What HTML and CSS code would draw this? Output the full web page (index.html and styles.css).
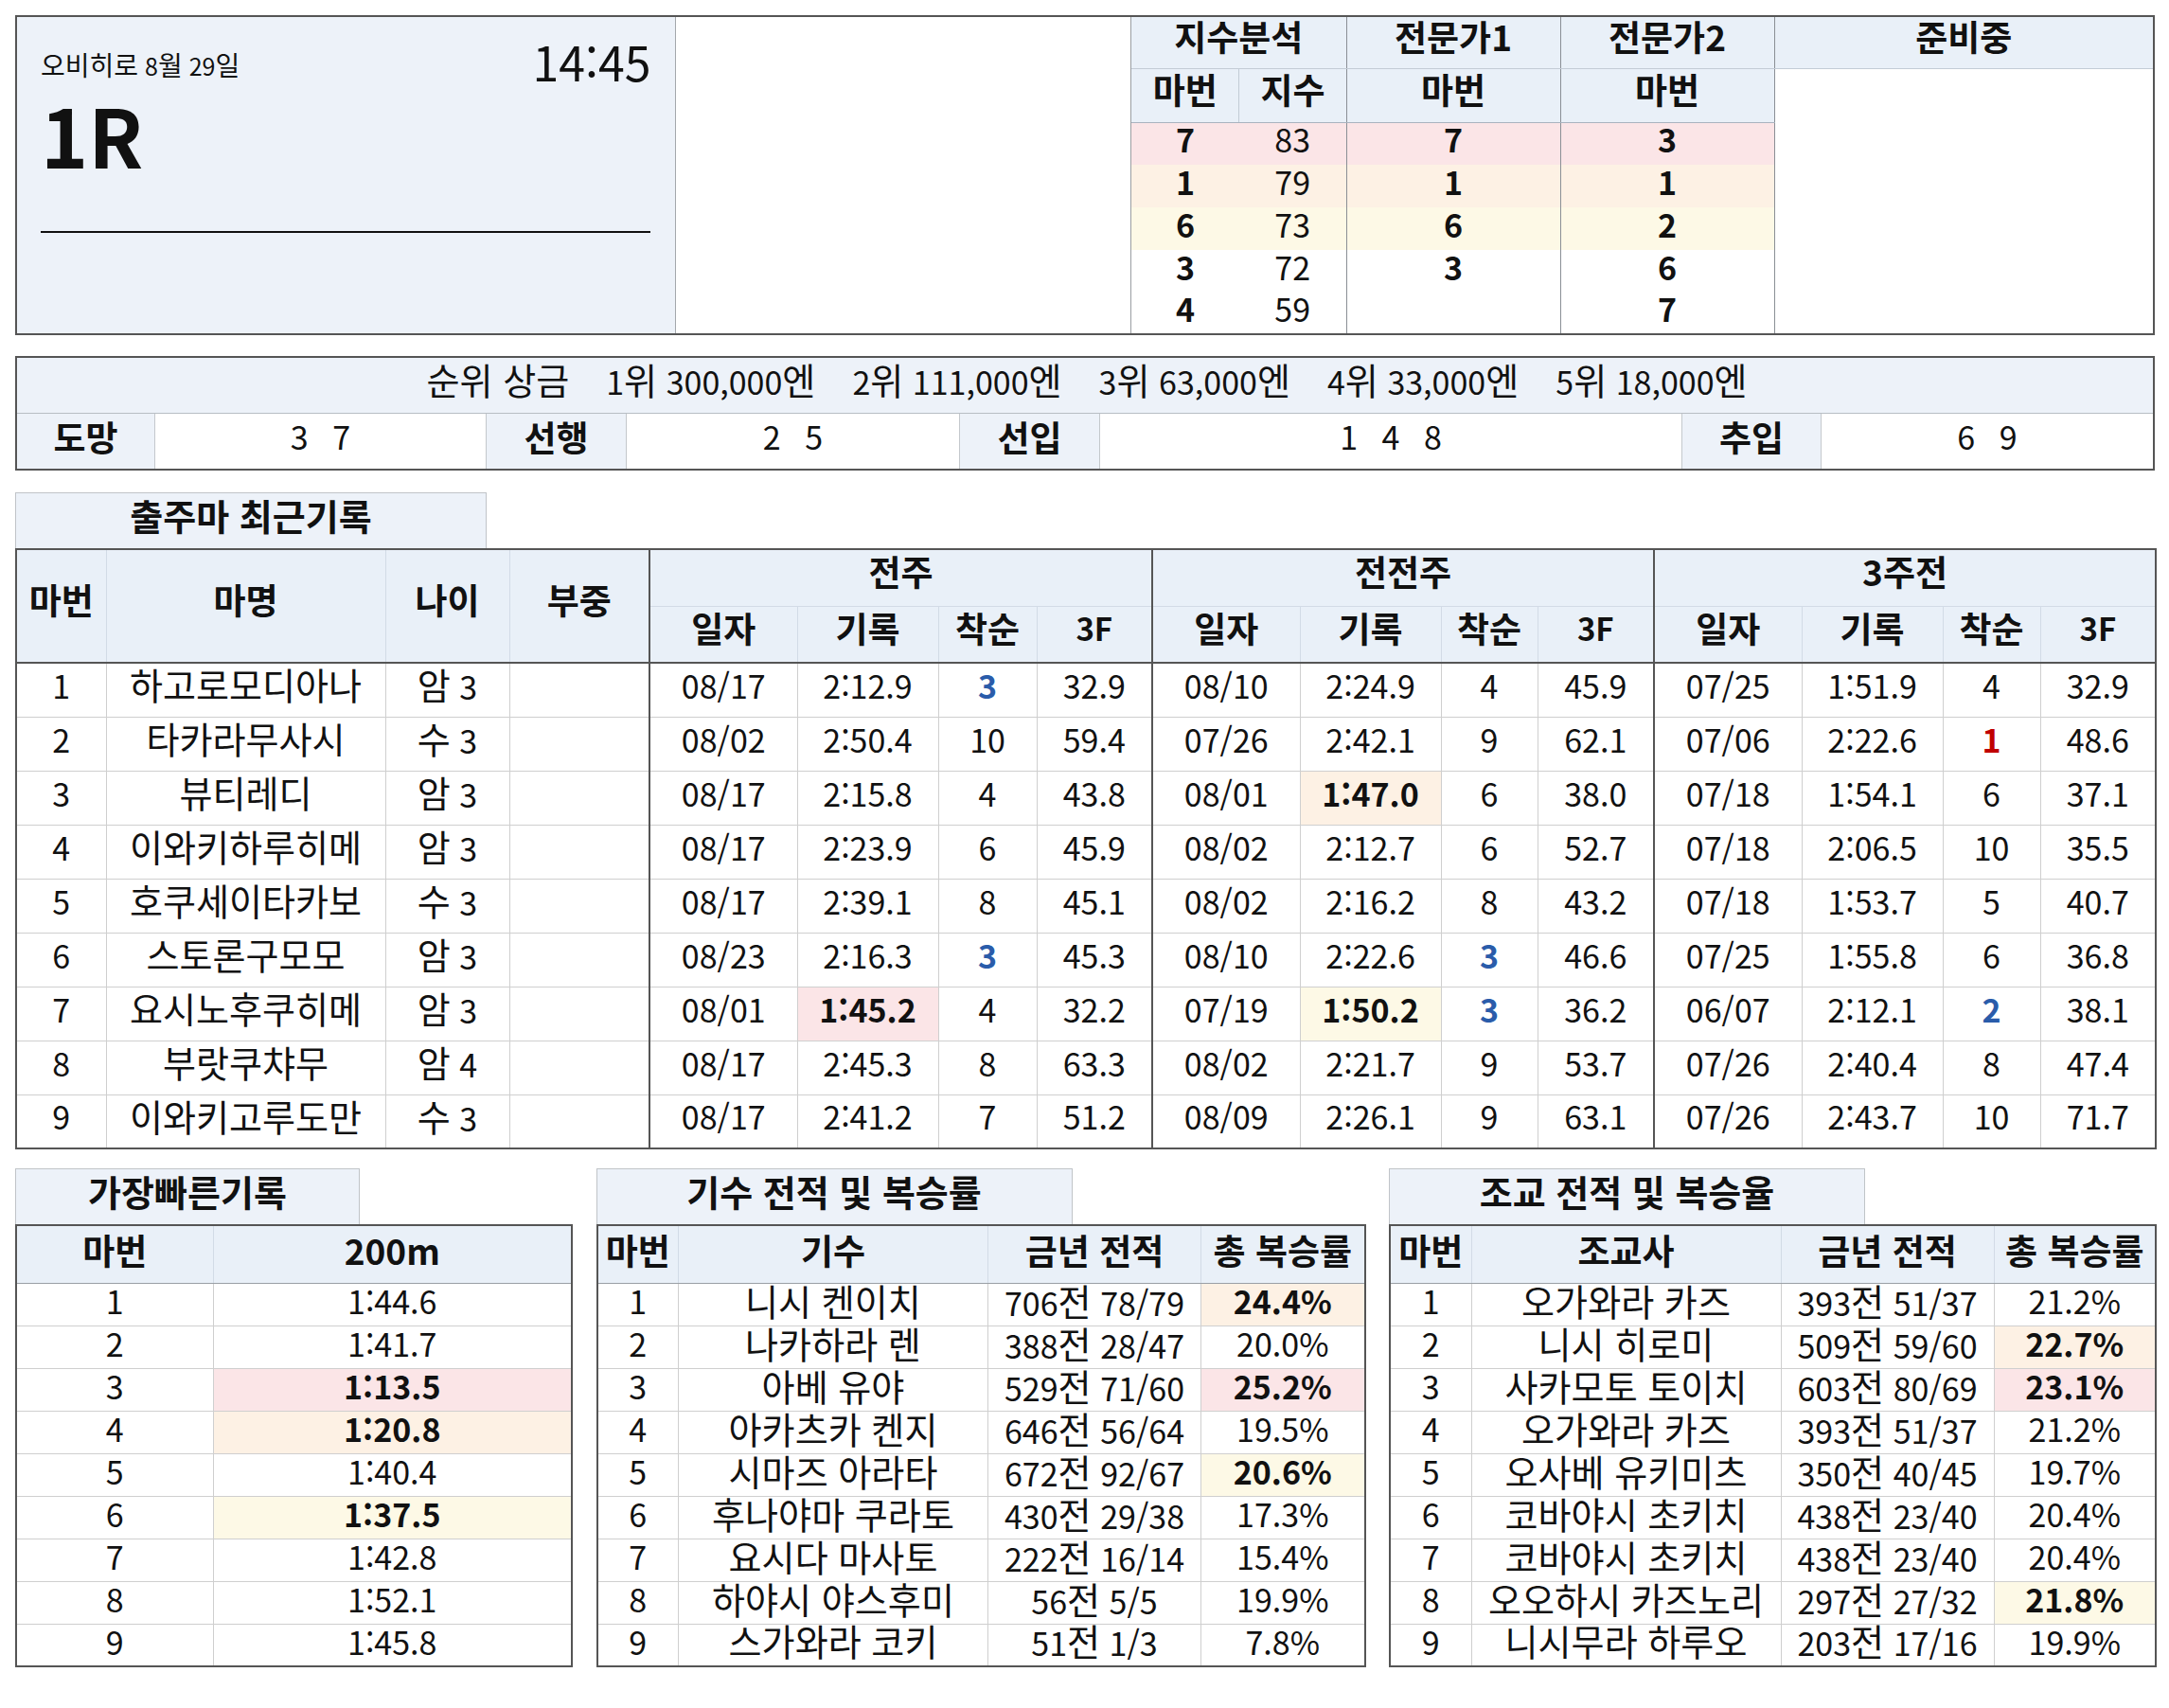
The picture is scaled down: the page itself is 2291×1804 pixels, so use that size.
FILE: index.html
```html
<!DOCTYPE html>
<html lang="ko">
<head>
<meta charset="utf-8">
<title>1R 출주마 정보</title>
<link rel="stylesheet" href="styles.css">
</head>
<body>
<div class="page">
  <section class="top">
    <div class="race">
      <div class="race-head">
        <span class="race-date"><span class="ko">오비히로</span> 8<span class="ko">월</span> 29<span class="ko">일</span></span>
        <span class="race-time">14:45</span>
      </div>
      <div class="race-no">1R</div>
      <div class="race-line"></div>
    </div>
    <div class="top-blank"></div>
    <div class="index-wrap">
      <table class="index">
        <colgroup><col class="i1"><col class="i2"><col class="i3"><col class="i4"><col class="i5"></colgroup>
        <tr class="ih1">
          <th colspan="2" class="gr">지수분석</th>
          <th class="gr">전문가1</th>
          <th class="gr">전문가2</th>
          <th>준비중</th>
        </tr>
        <tr class="ih2">
          <th class="lt">마번</th>
          <th class="gr">지수</th>
          <th class="gr">마번</th>
          <th class="gr">마번</th>
          <td class="blank" rowspan="6"></td>
        </tr>
        <tr class="pink"><td class="b">7</td><td class="gr">83</td><td class="b gr">7</td><td class="b gr">3</td></tr>
        <tr class="orange"><td class="b">1</td><td class="gr">79</td><td class="b gr">1</td><td class="b gr">1</td></tr>
        <tr class="yellow"><td class="b">6</td><td class="gr">73</td><td class="b gr">6</td><td class="b gr">2</td></tr>
        <tr class="short"><td class="b">3</td><td class="gr">72</td><td class="b gr">3</td><td class="b gr">6</td></tr>
        <tr class="short"><td class="b">4</td><td class="gr">59</td><td class="b gr"></td><td class="b gr">7</td></tr>
      </table>
    </div>
  </section>

  <section class="prize">
    <div class="prize-row">
      <span class="ko">순위 상금</span>
      <span>1<span class="ko">위</span> 300,000<span class="ko">엔</span></span>
      <span>2<span class="ko">위</span> 111,000<span class="ko">엔</span></span>
      <span>3<span class="ko">위</span> 63,000<span class="ko">엔</span></span>
      <span>4<span class="ko">위</span> 33,000<span class="ko">엔</span></span>
      <span>5<span class="ko">위</span> 18,000<span class="ko">엔</span></span>
    </div>
    <div class="style-row">
      <div class="lbl">도망</div><div class="val">3 7</div>
      <div class="lbl">선행</div><div class="val">2 5</div>
      <div class="lbl">선입</div><div class="val">1 4 8</div>
      <div class="lbl">추입</div><div class="val">6 9</div>
    </div>
  </section>

  <section class="recent">
    <div class="tab tab-recent">출주마 최근기록</div>
    <table class="main">
      <colgroup>
        <col class="m95"><col class="m295"><col class="m131"><col class="m148">
        <col class="m156"><col class="m149"><col class="m104"><col class="m122">
        <col class="m156"><col class="m149"><col class="m102"><col class="m123">
        <col class="m156"><col class="m149"><col class="m103"><col class="m122">
      </colgroup>
      <thead>
        <tr class="mh1">
          <th rowspan="2" class="hb">마번</th>
          <th rowspan="2" class="hb">마명</th>
          <th rowspan="2" class="hb">나이</th>
          <th rowspan="2" class="hb">부중</th>
          <th colspan="4" class="gs">전주</th>
          <th colspan="4" class="gs">전전주</th>
          <th colspan="4" class="gs">3주전</th>
        </tr>
        <tr class="mh2">
          <th class="hb gs">일자</th><th class="hb">기록</th><th class="hb">착순</th><th class="hb n">3F</th>
          <th class="hb gs">일자</th><th class="hb">기록</th><th class="hb">착순</th><th class="hb n">3F</th>
          <th class="hb gs">일자</th><th class="hb">기록</th><th class="hb">착순</th><th class="hb n">3F</th>
        </tr>
      </thead>
      <tbody>
        <tr><td>1</td><td class="ko">하고로모디아나</td><td><span class="ko">암</span> 3</td><td></td>
          <td class="gs">08/17</td><td>2:12.9</td><td class="blue">3</td><td>32.9</td>
          <td class="gs">08/10</td><td>2:24.9</td><td>4</td><td>45.9</td>
          <td class="gs">07/25</td><td>1:51.9</td><td>4</td><td>32.9</td></tr>
        <tr><td>2</td><td class="ko">타카라무사시</td><td><span class="ko">수</span> 3</td><td></td>
          <td class="gs">08/02</td><td>2:50.4</td><td>10</td><td>59.4</td>
          <td class="gs">07/26</td><td>2:42.1</td><td>9</td><td>62.1</td>
          <td class="gs">07/06</td><td>2:22.6</td><td class="red">1</td><td>48.6</td></tr>
        <tr><td>3</td><td class="ko">뷰티레디</td><td><span class="ko">암</span> 3</td><td></td>
          <td class="gs">08/17</td><td>2:15.8</td><td>4</td><td>43.8</td>
          <td class="gs">08/01</td><td class="orange b">1:47.0</td><td>6</td><td>38.0</td>
          <td class="gs">07/18</td><td>1:54.1</td><td>6</td><td>37.1</td></tr>
        <tr><td>4</td><td class="ko">이와키하루히메</td><td><span class="ko">암</span> 3</td><td></td>
          <td class="gs">08/17</td><td>2:23.9</td><td>6</td><td>45.9</td>
          <td class="gs">08/02</td><td>2:12.7</td><td>6</td><td>52.7</td>
          <td class="gs">07/18</td><td>2:06.5</td><td>10</td><td>35.5</td></tr>
        <tr><td>5</td><td class="ko">호쿠세이타카보</td><td><span class="ko">수</span> 3</td><td></td>
          <td class="gs">08/17</td><td>2:39.1</td><td>8</td><td>45.1</td>
          <td class="gs">08/02</td><td>2:16.2</td><td>8</td><td>43.2</td>
          <td class="gs">07/18</td><td>1:53.7</td><td>5</td><td>40.7</td></tr>
        <tr><td>6</td><td class="ko">스토론구모모</td><td><span class="ko">암</span> 3</td><td></td>
          <td class="gs">08/23</td><td>2:16.3</td><td class="blue">3</td><td>45.3</td>
          <td class="gs">08/10</td><td>2:22.6</td><td class="blue">3</td><td>46.6</td>
          <td class="gs">07/25</td><td>1:55.8</td><td>6</td><td>36.8</td></tr>
        <tr><td>7</td><td class="ko">요시노후쿠히메</td><td><span class="ko">암</span> 3</td><td></td>
          <td class="gs">08/01</td><td class="pink b">1:45.2</td><td>4</td><td>32.2</td>
          <td class="gs">07/19</td><td class="yellow b">1:50.2</td><td class="blue">3</td><td>36.2</td>
          <td class="gs">06/07</td><td>2:12.1</td><td class="blue">2</td><td>38.1</td></tr>
        <tr><td>8</td><td class="ko">부랏쿠챠무</td><td><span class="ko">암</span> 4</td><td></td>
          <td class="gs">08/17</td><td>2:45.3</td><td>8</td><td>63.3</td>
          <td class="gs">08/02</td><td>2:21.7</td><td>9</td><td>53.7</td>
          <td class="gs">07/26</td><td>2:40.4</td><td>8</td><td>47.4</td></tr>
        <tr><td>9</td><td class="ko">이와키고루도만</td><td><span class="ko">수</span> 3</td><td></td>
          <td class="gs">08/17</td><td>2:41.2</td><td>7</td><td>51.2</td>
          <td class="gs">08/09</td><td>2:26.1</td><td>9</td><td>63.1</td>
          <td class="gs">07/26</td><td>2:43.7</td><td>10</td><td>71.7</td></tr>
      </tbody>
    </table>
  </section>

  <section class="bottom">
    <div class="block">
      <div class="tab tab-fast">가장빠른기록</div>
      <table class="sub">
        <colgroup><col class="f1"><col class="f2"></colgroup>
        <thead><tr><th>마번</th><th class="n">200m</th></tr></thead>
        <tbody>
          <tr><td>1</td><td>1:44.6</td></tr>
          <tr><td>2</td><td>1:41.7</td></tr>
          <tr><td>3</td><td class="pink b">1:13.5</td></tr>
          <tr><td>4</td><td class="orange b">1:20.8</td></tr>
          <tr><td>5</td><td>1:40.4</td></tr>
          <tr><td>6</td><td class="yellow b">1:37.5</td></tr>
          <tr><td>7</td><td>1:42.8</td></tr>
          <tr><td>8</td><td>1:52.1</td></tr>
          <tr><td>9</td><td>1:45.8</td></tr>
        </tbody>
      </table>
    </div>
    <div class="block">
      <div class="tab tab-wide">기수 전적 및 복승률</div>
      <table class="sub">
        <colgroup><col class="j1"><col class="j2"><col class="j3"><col class="j4"></colgroup>
        <thead><tr><th>마번</th><th>기수</th><th>금년 전적</th><th>총 복승률</th></tr></thead>
        <tbody>
          <tr><td>1</td><td class="ko">니시 켄이치</td><td>706<span class="ko">전</span> 78/79</td><td class="orange b">24.4%</td></tr>
          <tr><td>2</td><td class="ko">나카하라 렌</td><td>388<span class="ko">전</span> 28/47</td><td>20.0%</td></tr>
          <tr><td>3</td><td class="ko">아베 유야</td><td>529<span class="ko">전</span> 71/60</td><td class="pink b">25.2%</td></tr>
          <tr><td>4</td><td class="ko">아카츠카 켄지</td><td>646<span class="ko">전</span> 56/64</td><td>19.5%</td></tr>
          <tr><td>5</td><td class="ko">시마즈 아라타</td><td>672<span class="ko">전</span> 92/67</td><td class="yellow b">20.6%</td></tr>
          <tr><td>6</td><td class="ko">후나야마 쿠라토</td><td>430<span class="ko">전</span> 29/38</td><td>17.3%</td></tr>
          <tr><td>7</td><td class="ko">요시다 마사토</td><td>222<span class="ko">전</span> 16/14</td><td>15.4%</td></tr>
          <tr><td>8</td><td class="ko">하야시 야스후미</td><td>56<span class="ko">전</span> 5/5</td><td>19.9%</td></tr>
          <tr><td>9</td><td class="ko">스가와라 코키</td><td>51<span class="ko">전</span> 1/3</td><td>7.8%</td></tr>
        </tbody>
      </table>
    </div>
    <div class="block">
      <div class="tab tab-wide">조교 전적 및 복승율</div>
      <table class="sub">
        <colgroup><col class="t1"><col class="t2"><col class="t3"><col class="t4"></colgroup>
        <thead><tr><th>마번</th><th>조교사</th><th>금년 전적</th><th>총 복승률</th></tr></thead>
        <tbody>
          <tr><td>1</td><td class="ko">오가와라 카즈</td><td>393<span class="ko">전</span> 51/37</td><td>21.2%</td></tr>
          <tr><td>2</td><td class="ko">니시 히로미</td><td>509<span class="ko">전</span> 59/60</td><td class="orange b">22.7%</td></tr>
          <tr><td>3</td><td class="ko">사카모토 토이치</td><td>603<span class="ko">전</span> 80/69</td><td class="pink b">23.1%</td></tr>
          <tr><td>4</td><td class="ko">오가와라 카즈</td><td>393<span class="ko">전</span> 51/37</td><td>21.2%</td></tr>
          <tr><td>5</td><td class="ko">오사베 유키미츠</td><td>350<span class="ko">전</span> 40/45</td><td>19.7%</td></tr>
          <tr><td>6</td><td class="ko">코바야시 초키치</td><td>438<span class="ko">전</span> 23/40</td><td>20.4%</td></tr>
          <tr><td>7</td><td class="ko">코바야시 초키치</td><td>438<span class="ko">전</span> 23/40</td><td>20.4%</td></tr>
          <tr><td>8</td><td class="ko">오오하시 카즈노리</td><td>297<span class="ko">전</span> 27/32</td><td class="yellow b">21.8%</td></tr>
          <tr><td>9</td><td class="ko">니시무라 하루오</td><td>203<span class="ko">전</span> 17/16</td><td>19.9%</td></tr>
        </tbody>
      </table>
    </div>
  </section>
</div>
</body>
</html>
```

FILE: styles.css
```css
* { box-sizing: border-box; }

body {
  margin: 0;
  background: #ffffff;
  color: #111111;
  font-family: "Noto Sans CJK KR", "Noto Sans", sans-serif;
}

.page {
  width: 2291px;
  padding: 16px 15px 0 16px;
}

/* Hangul is set a little larger than digits, as in the source font */
.ko { font-size: 1.12em; }

/* ---------- top block ---------- */
.top {
  display: flex;
  height: 338px;
  border: 2px solid #555;
}

.race {
  width: 697px;
  background: #edf2f9;
  border-right: 1px solid #a4a8ac;
  padding: 21px 26px 0 25px;
}

.race-head {
  display: flex;
  justify-content: space-between;
  align-items: flex-start;
  height: 50px;
}

.race-date {
  font-size: 25px;
  line-height: 25px;
  margin-top: 17px;
}

.race-time {
  font-size: 50px;
  line-height: 50px;
}

.race-no {
  font-size: 85px;
  font-weight: 700;
  line-height: 85px;
  margin-top: 9px;
}

.race-line {
  height: 2px;
  background: #111;
  margin-top: 61px;
}

.top-blank { width: 480px; }

.index-wrap {
  flex: 1;
  border-left: 1px solid #9a9ea2;
}

table {
  border-collapse: collapse;
  table-layout: fixed;
}

.index {
  width: 100%;
  height: 100%;
  font-size: 34px;
}

.index .i1 { width: 114px; }
.index .i2 { width: 113px; }
.index .i3 { width: 226px; }
.index .i4 { width: 226px; }
.index .i5 { width: 400px; }

.index th,
.index td {
  padding: 0 0 9px 0;
  text-align: center;
  line-height: 0.7;
}

.index th {
  background: #e9f0f8;
  font-weight: 700;
  font-size: 37px;
  padding-bottom: 12px;
}

.index .ih1 th {
  height: 54px;
  border-bottom: 1px solid #c3ccd6;
}

.index .ih2 th {
  height: 57px;
  border-bottom: 1px solid #a9b3bf;
}

.index .gr { border-right: 1px solid #8a8f95; }
.index .lt { border-right: 1px solid #c3ccd6; }

.index td { height: 45px; }
.index .short td { height: 44px; }

.index td.blank {
  background: #fff;
  border: none;
}

.b { font-weight: 700; }

.pink td, td.pink { background: #fbe5e7; }
.orange td, td.orange { background: #fdf1e4; }
.yellow td, td.yellow { background: #fdf9e6; }

/* ---------- prize block ---------- */
.prize {
  margin-top: 22px;
  height: 121px;
  border: 2px solid #555;
  font-size: 34px;
}

.prize-row {
  height: 59px;
  background: #edf2f9;
  border-bottom: 1px solid #b8bec4;
  display: flex;
  justify-content: center;
  align-items: center;
  gap: 39px;
  padding: 0 0 12px 4px;
  line-height: 1;
}

.style-row {
  display: grid;
  grid-template-columns: 146px 350px 148px 352px 148px 615px 147px 1fr;
  height: 58px;
  line-height: 1;
}

.style-row > div {
  display: flex;
  align-items: center;
  justify-content: center;
  border-right: 1px solid #c4c8cc;
  padding-bottom: 10px;
}

.style-row > div:last-child { border-right: none; }

.style-row .lbl {
  background: #edf2f9;
  font-weight: 700;
  font-size: 37px;
}

.style-row .val { word-spacing: 16px; }

/* ---------- tabs ---------- */
.recent { margin-top: 23px; }

.tab {
  height: 59px;
  background: #edf2f9;
  border: 1px solid #c0c4c8;
  border-bottom: none;
  font-size: 38px;
  font-weight: 700;
  line-height: 1;
  display: flex;
  align-items: center;
  justify-content: center;
  padding-bottom: 13px;
}

.tab-recent { width: 498px; }
.tab-fast { width: 364px; }
.tab-wide { width: 503px; }

/* ---------- main table ---------- */
.main {
  width: 2260px;
  border: 2px solid #555;
  font-size: 34px;
}

.m95 { width: 95px; }
.m295 { width: 295px; }
.m131 { width: 131px; }
.m148 { width: 148px; }
.m156 { width: 156px; }
.m149 { width: 149px; }
.m104 { width: 104px; }
.m122 { width: 122px; }
.m102 { width: 102px; }
.m123 { width: 123px; }
.m103 { width: 103px; }

.main th {
  background: #e9f0f8;
  font-weight: 700;
  font-size: 37px;
  border: 1px solid #d2dbe6;
  height: 60px;
  padding: 0 0 12px 0;
  line-height: 0.7;
}

.main td {
  border: 1px solid #cfcfcf;
  height: 57px;
  padding: 0 0 10px 0;
  text-align: center;
  line-height: 0.7;
}

.main .hb { border-bottom: 2px solid #555; }
.main .gs { border-left: 2px solid #555; }

th.n { font-size: 33px; }

.blue { color: #2a5caa; font-weight: 700; }
.red { color: #c00000; font-weight: 700; }

/* ---------- bottom tables ---------- */
.bottom {
  display: grid;
  grid-template-columns: 587px 811px 809px;
  column-gap: 26.5px;
  margin-top: 20px;
}

.sub {
  width: 100%;
  border: 2px solid #555;
  font-size: 34px;
}

.f1 { width: 208px; }
.f2 { width: 379px; }
.j1 { width: 86px; }
.j2 { width: 327px; }
.j3 { width: 225px; }
.j4 { width: 173px; }
.t1 { width: 86px; }
.t2 { width: 327px; }
.t3 { width: 225px; }
.t4 { width: 171px; }

.sub th {
  background: #e9f0f8;
  font-weight: 700;
  font-size: 37px;
  height: 61px;
  padding: 0 0 7px 0;
  border: 1px solid #d2dbe6;
  border-bottom: 1px solid #9aa0a6;
  line-height: 0.7;
  white-space: nowrap;
}

.sub td {
  height: 45px;
  padding: 0 0 7px 0;
  border: 1px solid #cfcfcf;
  text-align: center;
  line-height: 0.7;
  white-space: nowrap;
}
```
